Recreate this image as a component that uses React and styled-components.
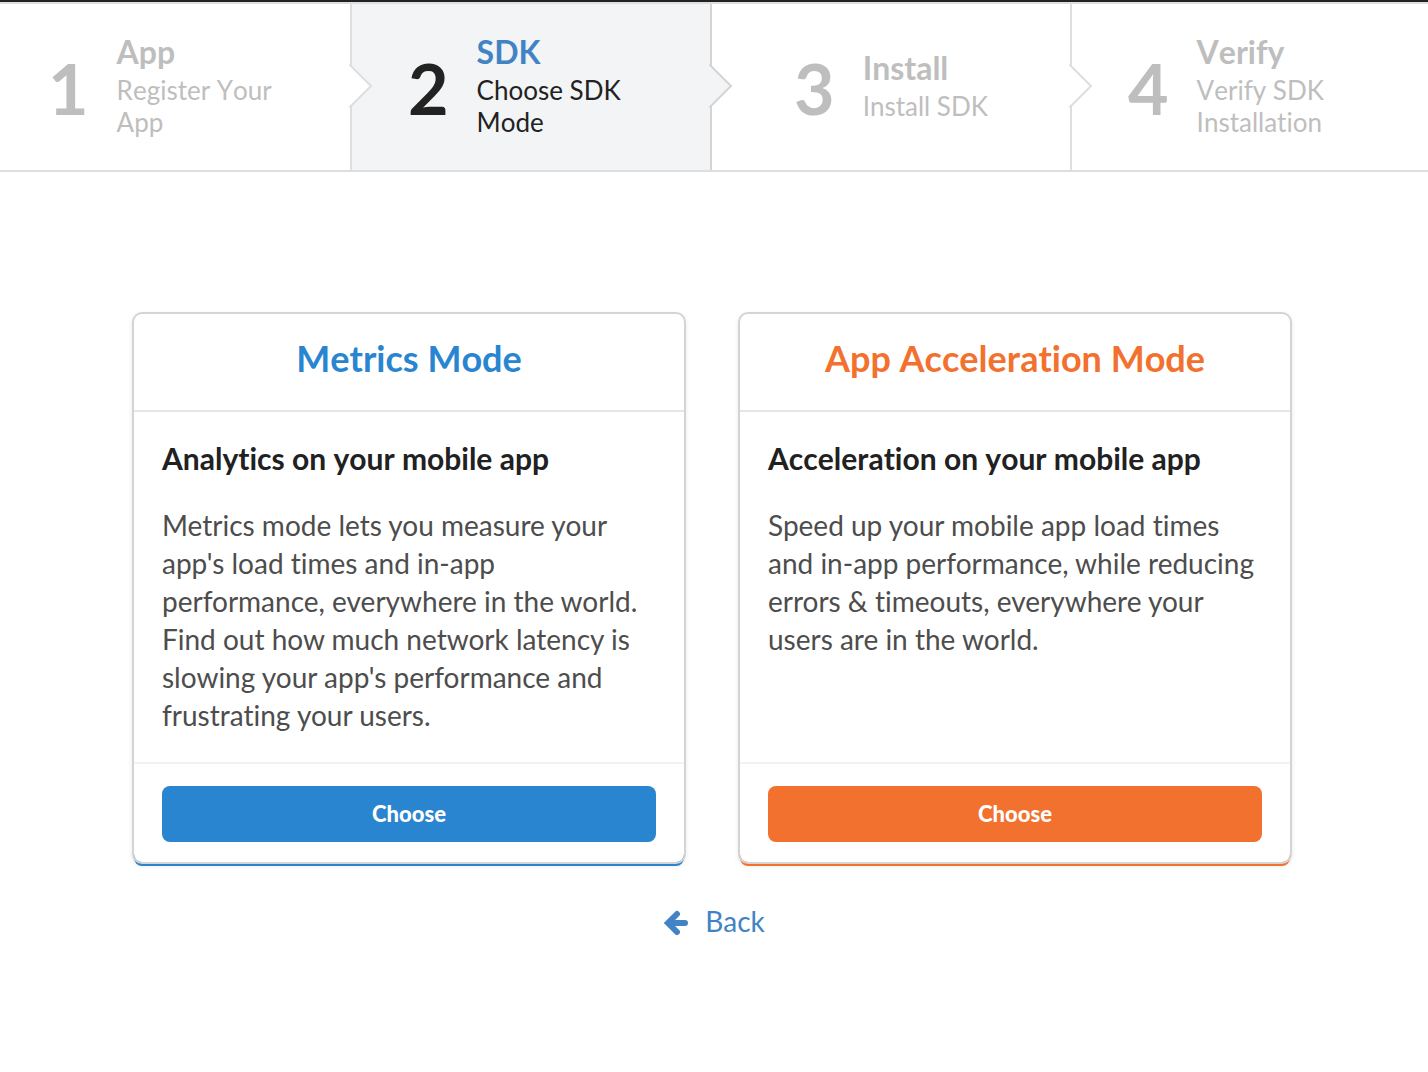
import React from 'react';
import styled, { createGlobalStyle } from 'styled-components';

const Global = createGlobalStyle`
  * { box-sizing: border-box; }
  body {
    margin: 0;
    background: #fff;
    color: #212121;
    font-family: Lato, "Liberation Sans", sans-serif;
    font-kerning: none;
    font-variant-ligatures: none;
  }
  h1, h2, h3, p, ol { margin: 0; padding: 0; }
`;

const Page = styled.div`
  border-top: 2px solid #222;
`;

const Steps = styled.ol`
  display: grid;
  grid-template-columns: 352fr 360fr 360fr 356fr;
  list-style: none;
  border-top: 2px solid #dededf;
  border-bottom: 2px solid #dededf;
`;

const Step = styled.li`
  position: relative;
  display: flex;
  align-items: center;
  justify-content: center;
  gap: 28px;
  min-height: 166px;
  padding: 0 56px 2px;
  color: ${(p) => (p.$active ? '#222' : '#bebebe')};
  background: ${(p) => (p.$active ? '#f3f4f5' : '#fff')};
  border-right: 2px solid ${(p) => (p.$active ? '#d4d4d5' : '#dededf')};
  &:first-child { padding-left: 48px; }
  &:last-child { border-right: 0; }
`;

const Arrow = styled.svg`
  position: absolute;
  z-index: 1;
  right: -23px;
  top: 50%;
  width: 24px;
  height: 44px;
  margin-top: -23px;
`;

const Digit = styled.span`
  padding-top: 4px;
  font-size: 70px;
  line-height: 72px;
  font-weight: 700;
`;

const StepTitle = styled.h2`
  margin-bottom: 4px;
  font-size: 32px;
  line-height: 36px;
  font-weight: 700;
  color: ${(p) => (p.$active ? '#4183c4' : 'inherit')};
`;

const StepText = styled.p`
  font-size: 26px;
  line-height: 32px;
`;

const Main = styled.main`
  display: flex;
  flex-direction: column;
  align-items: center;
  padding: 142px 134px 40px;
`;

const Cards = styled.div`
  display: grid;
  grid-template-columns: 1fr 1fr;
  gap: 56px;
  width: 100%;
  padding-right: 4px;
`;

const Card = styled.section`
  display: flex;
  flex-direction: column;
  border-radius: 8px;
  box-shadow: 0 0 0 2px #d4d4d5, 0 4px 0 0 ${(p) => p.$tone}, 0 2px 6px 0 #d4d4d5;
`;

const CardTitle = styled.h1`
  padding: 20px 28px 28px;
  border-bottom: 2px solid #e6e6e7;
  font-size: 36px;
  line-height: 48px;
  text-align: center;
  color: ${(p) => p.$tone};
`;

const CardBody = styled.div`
  flex: 1;
  padding: 28px;
`;

const Subtitle = styled.h3`
  margin-bottom: 30px;
  font-size: 30px;
  line-height: 36px;
`;

const Copy = styled.p`
  color: #4d4d4d;
  font-size: 28px;
  line-height: 38px;
  font-kerning: normal;
`;

const CardFooter = styled.div`
  padding: 22px 28px 20px;
  border-top: 2px solid #f2f2f3;
`;

const Choose = styled.button`
  display: block;
  width: 100%;
  height: 56px;
  padding: 0 0 2px;
  border: 0;
  border-radius: 8px;
  background: ${(p) => p.$tone};
  color: #fff;
  font-family: inherit;
  font-size: 22px;
  font-weight: 900;
  cursor: pointer;
`;

const Back = styled.a`
  display: flex;
  align-items: center;
  gap: 16px;
  margin-top: 40px;
  color: #4183c4;
  font-size: 28px;
  line-height: 38px;
  text-decoration: none;
`;

const BackArrow = styled.svg`
  width: 26px;
  height: 28px;
`;

const steps = [
  { title: 'App', text: 'Register Your App' },
  { title: 'SDK', text: 'Choose SDK Mode', active: true },
  { title: 'Install', text: 'Install SDK' },
  { title: 'Verify', text: 'Verify SDK Installation' },
];

const modes = [
  {
    title: 'Metrics Mode',
    tone: '#2985d0',
    subtitle: 'Analytics on your mobile app',
    copy: "Metrics mode lets you measure your app's load times and in-app performance, everywhere in the world. Find out how much network latency is slowing your app's performance and frustrating your users.",
  },
  {
    title: 'App Acceleration Mode',
    tone: '#f2712e',
    subtitle: 'Acceleration on your mobile app',
    copy: 'Speed up your mobile app load times and in-app performance, while reducing errors & timeouts, everywhere your users are in the world.',
  },
];

export default function App() {
  return (
    <Page>
      <Global />
      <Steps>
        {steps.map((s, i) => (
          <Step key={s.title} $active={s.active}>
            <Digit>{i + 1}</Digit>
            <div>
              <StepTitle $active={s.active}>{s.title}</StepTitle>
              <StepText>{s.text}</StepText>
            </div>
            {i < steps.length - 1 && (
              <Arrow viewBox="0 0 24 44" aria-hidden="true">
                <path d="M0 0L22 22L0 44Z" fill={s.active ? '#f3f4f5' : '#fff'} />
                <path
                  d="M0.5 0.5L22 22L0.5 43.5"
                  fill="none"
                  stroke={s.active ? '#d4d4d5' : '#dededf'}
                  strokeWidth="2"
                />
              </Arrow>
            )}
          </Step>
        ))}
      </Steps>
      <Main>
        <Cards>
          {modes.map((m) => (
            <Card key={m.title} $tone={m.tone}>
              <CardTitle $tone={m.tone}>{m.title}</CardTitle>
              <CardBody>
                <Subtitle>{m.subtitle}</Subtitle>
                <Copy>{m.copy}</Copy>
              </CardBody>
              <CardFooter>
                <Choose type="button" $tone={m.tone}>Choose</Choose>
              </CardFooter>
            </Card>
          ))}
        </Cards>
        <Back href="#">
          <BackArrow viewBox="0 0 26 28" aria-hidden="true">
            <path
              d="M14 7L5 16L14 25M6 16H22"
              fill="none"
              stroke="currentColor"
              strokeWidth="6"
              strokeLinecap="round"
            />
          </BackArrow>
          Back
        </Back>
      </Main>
    </Page>
  );
}
